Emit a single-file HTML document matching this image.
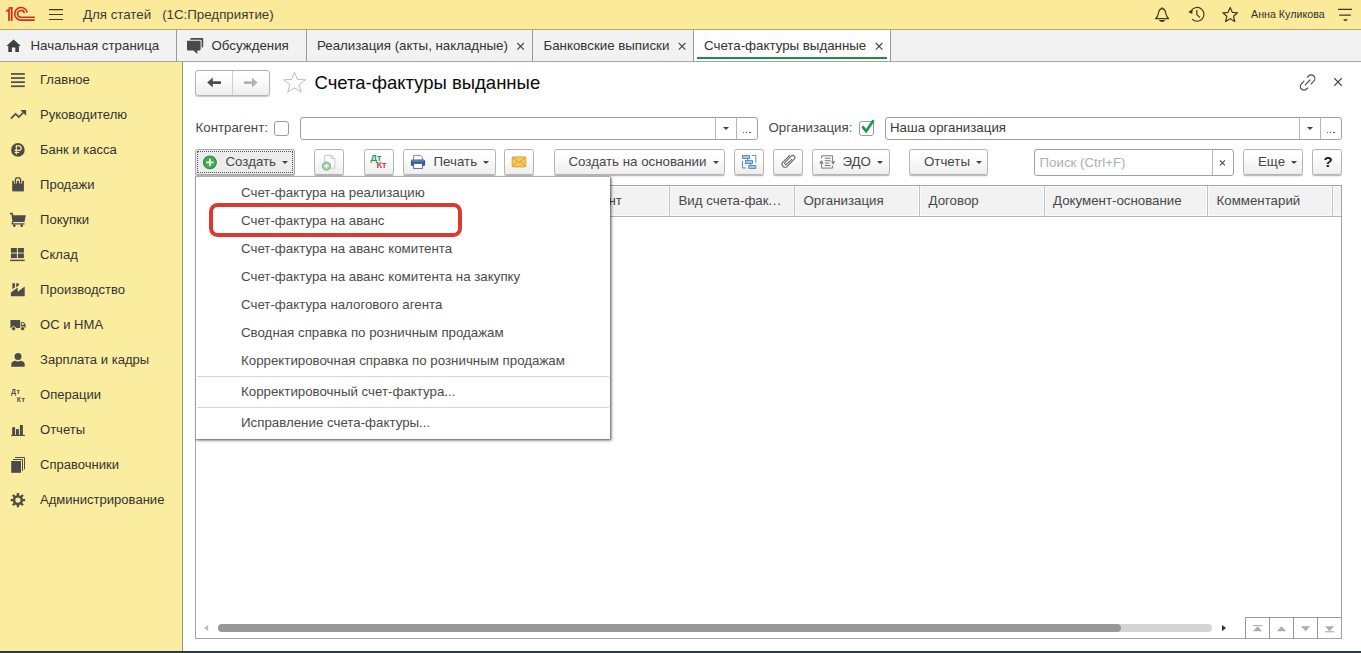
<!DOCTYPE html>
<html lang="ru">
<head>
<meta charset="utf-8">
<title>Счета-фактуры выданные</title>
<style>
*{box-sizing:border-box;margin:0;padding:0}
html,body{width:1361px;height:653px;overflow:hidden;background:#fff}
body{font-family:"Liberation Sans",sans-serif;font-size:13.3px;color:#333;position:relative}
.abs{position:absolute}
svg{position:absolute;overflow:visible}
.t{position:absolute;white-space:nowrap;line-height:1;font-size:13.3px}
#top{position:absolute;left:0;top:0;width:1361px;height:30px;background:#fbea9a;border-bottom:1px solid #b5aa72}
#tabs{position:absolute;left:0;top:30px;width:1361px;height:32px;background:#f2f2f2;border-bottom:1px solid #a6a6a6}
.tsep{position:absolute;top:30px;width:1px;height:31px;background:#9a9a9a}
.tabt{position:absolute;white-space:nowrap;font-size:13.3px;line-height:1;color:#333;top:39px}
#side{position:absolute;left:0;top:62px;width:183px;height:589px;background:#fbed9f;border-right:1px solid #9c966c}
.sit{position:absolute;left:40px;font-size:13.05px;line-height:1;color:#333;white-space:nowrap}
.btn{position:absolute;height:26px;top:149px;border:1px solid #b4b4b4;border-radius:2.5px;background:linear-gradient(#ffffff 20%,#eeeeee);box-shadow:0 1px 0 rgba(0,0,0,.2),0 2px 1px rgba(0,0,0,.07)}
.bt{position:absolute;white-space:nowrap;line-height:1;font-size:13.3px;color:#484848;top:155px}
.arr{position:absolute;width:0;height:0;border-left:3px solid transparent;border-right:3px solid transparent;border-top:3px solid #444;top:161px}
.inp{position:absolute;border:1px solid #a0a0a0;background:#fff;border-radius:3px}
.vl{position:absolute;width:1px;background:#b5b5b5}
.lbl{position:absolute;font-size:13.3px;line-height:1;color:#484848;white-space:nowrap}
.hcell{position:absolute;top:194px;font-size:13.3px;line-height:1;color:#484848;white-space:nowrap}
.hsep{position:absolute;top:186px;width:3px;height:30px;margin-left:-1px;background:linear-gradient(90deg,#fbfbfb 0,#fbfbfb 1px,#c2c2c2 1px,#c2c2c2 2px,#fbfbfb 2px,#fbfbfb 3px)}
.mi{position:absolute;left:241px;font-size:13.3px;line-height:1;color:#4c4c4c;white-space:nowrap}
</style>
</head>
<body>
<!-- TOP BAR -->
<div id="top"></div>
<svg style="left:0;top:0" width="70" height="30" viewBox="0 0 70 30">
  <g fill="none" stroke="#cf2f1c" stroke-width="1.6">
    <path d="M27.2,12.5 A6.3,6.3 0 1 0 21,20.1 H34.8"/>
    <path d="M24.3,13.1 A3.4,3.4 0 1 0 21,17.2 H34.8"/>
    <path d="M6.2,11.4 L9,9.6 V20.9" stroke-width="1.7"/>
    <path d="M11.7,7.2 V20.9" stroke-width="1.8"/>
    <path d="M8.6,8 H12.5" stroke-width="1.6"/>
  </g>
  <g stroke="#3f3a14" stroke-width="1.2">
    <path d="M49,9.6 H63 M49,14.5 H63 M49,19.5 H63"/>
  </g>
</svg>
<div class="t" style="left:83px;top:8px;color:#3b3b3b">Для статей&nbsp;&nbsp;&nbsp;(1С:Предприятие)</div>
<!-- bell -->
<svg style="left:1150px;top:4px" width="24" height="22" viewBox="1150 4 24 22">
  <g fill="none" stroke="#3c3920" stroke-width="1.2" stroke-linejoin="round">
    <path d="M1155.6,18.6 C1158.5,16.4 1158.2,13.6 1158.8,11.6 C1159.4,9.7 1160.5,8.6 1162.1,8.6 C1163.7,8.6 1164.8,9.7 1165.4,11.6 C1166,13.6 1165.7,16.4 1168.6,18.6 Z"/><path d="M1162.1,7.3 V8.7"/>
  </g>
  <path d="M1158.6,20.1 H1165.6 Q1162.1,24 1158.6,20.1 Z" fill="#3c3920"/>
</svg>
<!-- history -->
<svg style="left:1185px;top:4px" width="24" height="22" viewBox="1185 4 24 22">
  <g fill="none" stroke="#3c3920" stroke-width="1.2">
    <path d="M1190.85,11.4 A6.9,6.9 0 1 1 1192.2,19.2"/>
    <path d="M1196.8,10 V14.6 L1200,17.6"/>
  </g>
  <path d="M1188.2,11.9 L1192.6,9.6 L1192.2,14 Z" fill="#3c3920"/>
</svg>
<!-- star -->
<svg style="left:1220px;top:4px" width="24" height="22" viewBox="1220 4 24 22">
  <path d="M1230.2,7.4 L1232.3,12.3 L1237.6,12.8 L1233.6,16.3 L1234.8,21.5 L1230.2,18.8 L1225.6,21.5 L1226.8,16.3 L1222.8,12.8 L1228.1,12.3 Z" fill="none" stroke="#3c3920" stroke-width="1.2" stroke-linejoin="round"/>
</svg>
<div class="t" style="left:1251px;top:9px;font-size:10.7px;color:#333">Анна Куликова</div>
<svg style="left:1334px;top:4px" width="24" height="22" viewBox="1334 4 24 22">
  <path d="M1338,9.4 H1352 M1339.2,15.1 H1350.8" stroke="#3c3920" stroke-width="1.2" fill="none"/>
  <path d="M1343,19.2 H1348 L1345.5,21.6 Z" fill="#3c3920"/>
</svg>

<!-- TABS -->
<div id="tabs"></div>
<div class="abs" style="left:694px;top:30px;width:196px;height:31px;background:#fdfdfd"></div>
<div class="abs" style="left:697px;top:57px;width:190px;height:2px;background:#1d8a4b"></div>
<div class="tsep" style="left:176px"></div>
<div class="tsep" style="left:306px"></div>
<div class="tsep" style="left:532px"></div>
<div class="tsep" style="left:693px"></div>
<div class="tsep" style="left:890px"></div>
<!-- home icon -->
<svg style="left:4px;top:36px" width="20" height="20" viewBox="4 36 20 20">
  <path d="M13.6,39.4 L20.8,46 H18.9 V51.9 H15.3 V47.6 H11.9 V51.9 H8.3 V46 H6.4 Z" fill="#3f3f3f"/>
</svg>
<!-- discussions icon -->
<svg style="left:184px;top:36px" width="22" height="20" viewBox="184 36 22 20">
  <path d="M191,38 H202.4 Q203.2,38 203.2,38.8 V46.6 Q203.2,47.4 202.4,47.4 H201.6 V41 Q201.6,39.8 200.4,39.8 H190.2 V38.8 Q190.2,38 191,38 Z" fill="#4a4a4a"/>
  <path d="M187.8,40.8 H199.8 Q200.6,40.8 200.6,41.6 V49.6 Q200.6,50.4 199.8,50.4 H197.3 V53.9 L193.4,50.4 H187.8 Q187,50.4 187,49.6 V41.6 Q187,40.8 187.8,40.8 Z" fill="#4a4a4a"/>
</svg>
<div class="tabt" style="left:30.5px">Начальная страница</div>
<div class="tabt" style="left:211.5px">Обсуждения</div>
<div class="tabt" style="left:317px">Реализация (акты, накладные)</div>
<div class="tabt" style="left:543.5px">Банковские выписки</div>
<div class="tabt" style="left:704px">Счета-фактуры выданные</div>
<svg style="left:0;top:30px" width="1361" height="32" viewBox="0 30 1361 32">
  <g stroke="#444" stroke-width="1.1" fill="none">
    <path d="M517.3,43 L523.9,49.6 M523.9,43 L517.3,49.6"/>
    <path d="M678.8,43 L685.4,49.6 M685.4,43 L678.8,49.6"/>
    <path d="M875.8,43 L882.4,49.6 M882.4,43 L875.8,49.6"/>
  </g>
</svg>

<!-- SIDEBAR -->
<div id="side"></div>
<svg style="left:0;top:62px" width="40" height="460" viewBox="0 62 40 460">
 <g fill="#4b4b4b">
  <!-- Главное: 4 bars -->
  <rect x="11" y="73.1" width="13.8" height="1.7"/><rect x="11" y="77.2" width="13.8" height="1.7"/><rect x="11" y="81.3" width="13.8" height="1.7"/><rect x="11" y="85.4" width="13.8" height="1.7"/>
  <!-- Руководителю: trend arrow -->
  <path d="M20.4,110 H26.1 V115.7 Z"/>
  <!-- Банк и касса: ruble coin -->
  <circle cx="17.9" cy="149.9" r="6.8"/>
  <!-- Продажи: bag -->
  <path d="M12.2,180.8 H23.9 V191.4 H12.2 Z"/>
  <!-- Покупки: cart -->
  <path d="M9.8,212.8 H12.6 L13.3,215.3 H25.9 L24.4,221.9 H13.6 L12.9,222.6 V223.2 H24.6 V224.4 H11.6 V222.4 L12.4,221.2 L11.4,214.2 H9.8 Z"/>
  <circle cx="14.3" cy="225.7" r="1.35"/><circle cx="21.7" cy="225.7" r="1.35"/>
  <!-- Склад -->
  <rect x="10.9" y="248" width="6" height="4.6"/><rect x="17.9" y="248" width="6" height="4.6"/>
  <rect x="10.9" y="253.5" width="6" height="4.6"/><rect x="17.9" y="253.5" width="6" height="4.6"/>
  <rect x="10.1" y="259.7" width="14.6" height="1.4"/>
  <!-- Производство: factory -->
  <path d="M10.9,296.3 V292.6 L17.7,287.4 V291.8 L24.7,286.6 V296.3 Z"/>
  <path d="M12.4,283.3 H15 V287.2 L12.4,289.2 Z M16.2,283.3 H18.8 V285.4 L16.2,287.2 Z"/>
  <!-- ОС и НМА: truck -->
  <path d="M10.4,320.6 Q10.4,319.9 11.1,319.9 H20.1 V328 H10.4 Z"/>
  <path d="M20.8,321.9 H23.6 L25.5,324.6 V328 H20.8 Z"/>
  <!-- Зарплата и кадры: person -->
  <circle cx="18" cy="356.4" r="3.5"/>
  <path d="M11.3,366.8 V364.6 Q11.3,361.4 15.2,360.8 Q18,362.4 20.8,360.8 Q24.7,361.4 24.7,364.6 V366.8 Z"/>
  <!-- Отчеты: bars -->
  <rect x="12.2" y="427.2" width="2.9" height="7.8"/><rect x="16" y="429.1" width="2.9" height="5.9"/><rect x="19.9" y="425" width="3" height="10"/>
  <rect x="11.1" y="434.9" width="13.8" height="1.1"/>
  <!-- Справочники: books -->
  <rect x="11.2" y="461" width="9.8" height="11.8"/>
 </g>
 <g fill="none" stroke="#4b4b4b">
  <path d="M10.9,118.6 L15.6,113.9 L18.8,117 L23.8,112" stroke-width="1.7"/>
  <path d="M15.4,183.6 V180.2 Q15.4,177.6 18,177.6 Q20.6,177.6 20.6,180.2 V183.6" stroke="#fbed9f" stroke-width="3"/><path d="M15.4,183.6 V180.2 Q15.4,177.6 18,177.6 Q20.6,177.6 20.6,180.2 V183.6" stroke-width="1.3"/>
  <path d="M13,459.5 H22.5 V471" stroke-width="1"/>
  <path d="M15,457.5 H24.5 V469.3" stroke-width="1"/>
  <!-- gear -->
  <circle cx="17.9" cy="500.1" r="3.9" stroke-width="2.6"/>
  <path d="M22.70,500.10 L25.10,500.10 M21.29,503.49 L22.99,505.19 M17.90,504.90 L17.90,507.30 M14.51,503.49 L12.81,505.19 M13.10,500.10 L10.70,500.10 M14.51,496.71 L12.81,495.01 M17.90,495.30 L17.90,492.90 M21.29,496.71 L22.99,495.01" stroke-width="2.3"/>
 </g>
 <!-- ruble glyph -->
 <g fill="none" stroke="#fbed9f" stroke-width="1.2">
  <path d="M16.3,154.4 V145.8 H18.8 Q21.2,145.8 21.2,148.1 Q21.2,150.4 18.8,150.4 H14.6 M14.6,152.5 H19.2"/>
 </g>
 <g fill="#4b4b4b" stroke="#fbed9f" stroke-width="0.9"><circle cx="13.6" cy="328.7" r="2.1"/><circle cx="22.6" cy="328.7" r="2.1"/></g>
 <path d="M21.7,322.8 H23.2 L24.5,324.7 H21.7 Z" fill="#fbed9f"/>
</svg>
<div class="t" style="left:11px;top:388px;font-size:7px;font-weight:bold;letter-spacing:.5px;color:#4b4b4b">Дт</div>
<div class="t" style="left:16.7px;top:396px;font-size:7px;font-weight:bold;letter-spacing:.5px;color:#4b4b4b">Кт</div>
<div class="sit" style="top:73px">Главное</div>
<div class="sit" style="top:108px">Руководителю</div>
<div class="sit" style="top:143px">Банк и касса</div>
<div class="sit" style="top:178px">Продажи</div>
<div class="sit" style="top:213px">Покупки</div>
<div class="sit" style="top:248px">Склад</div>
<div class="sit" style="top:283px">Производство</div>
<div class="sit" style="top:318px">ОС и НМА</div>
<div class="sit" style="top:353px">Зарплата и кадры</div>
<div class="sit" style="top:388px">Операции</div>
<div class="sit" style="top:423px">Отчеты</div>
<div class="sit" style="top:458px">Справочники</div>
<div class="sit" style="top:493px">Администрирование</div>

<!-- CONTENT HEADER -->
<div class="abs" style="left:195px;top:70px;width:75px;height:26px;border:1px solid #b4b4b4;border-radius:3px;background:linear-gradient(#fff 20%,#eee);box-shadow:0 1px 1px rgba(0,0,0,.22)"></div>
<div class="abs" style="left:232px;top:71px;width:1px;height:24px;background:#cfcfcf"></div>
<svg style="left:195px;top:62px" width="120" height="42" viewBox="195 62 120 42">
  <path d="M207.2,82.6 L212.8,77.6 V81.2 H221 V84 H212.8 V87.6 Z" fill="#4d4d4d"/>
  <path d="M257.6,82.6 L252,77.6 V81.2 H244 V84 H252 V87.6 Z" fill="#b3b3b3"/>
  <path d="M294.5,72.2 L297.3,79.4 L305.4,79.8 L299.1,84.7 L301.3,92.2 L294.5,87.9 L287.7,92.2 L289.9,84.7 L283.6,79.8 L291.7,79.4 Z" fill="#fff" stroke="#bdbdbd" stroke-width="1" stroke-linejoin="miter"/>
</svg>
<div class="t" style="left:314.5px;top:74px;font-size:18.5px;color:#0a0a0a">Счета-фактуры выданные</div>
<svg style="left:1295px;top:70px" width="55" height="26" viewBox="1295 70 55 26">
  <g fill="none" stroke="#4a4a4a" stroke-width="1.15" stroke-linecap="round">
    <path d="M1307.4,77.2 L1308.6,76 A3.6,3.6 0 0 1 1313.8,81.2 L1311.2,83.8"/>
    <path d="M1307.8,87.8 L1306.6,89 A3.6,3.6 0 0 1 1301.4,83.8 L1304,81.2"/>
    <path d="M1305.2,84.8 L1310,80"/>
  </g>
  <path d="M1334.2,78.2 L1341.8,85.8 M1341.8,78.2 L1334.2,85.8" stroke="#3a3a3a" stroke-width="1.2" fill="none"/>
</svg>

<!-- FILTER ROW -->
<div class="lbl" style="left:195.5px;top:120.6px">Контрагент:</div>
<div class="inp" style="left:274px;top:121px;width:15px;height:15px;border-radius:3px;border-color:#9b9b9b"></div>
<div class="inp" style="left:300px;top:117px;width:458px;height:23px"></div>
<div class="vl" style="left:715px;top:118px;height:21px"></div>
<div class="vl" style="left:736px;top:118px;height:21px"></div>
<div class="arr" style="left:723px;top:127px"></div>
<div class="abs" style="left:743px;top:131.5px;width:1.2px;height:1.3px;background:#555"></div><div class="abs" style="left:746.2px;top:131.5px;width:1.2px;height:1.3px;background:#555"></div><div class="abs" style="left:749.4px;top:131.5px;width:1.2px;height:1.3px;background:#555"></div>
<div class="lbl" style="left:768.5px;top:120.6px">Организация:</div>
<div class="inp" style="left:859px;top:121px;width:15px;height:15px;border-radius:3px;border-color:#9b9b9b"></div>
<svg style="left:855px;top:114px" width="26" height="26" viewBox="855 114 26 26">
  <path d="M862.4,126.4 L866.1,131.2 L873.6,120.2" fill="none" stroke="#0f9a4e" stroke-width="2.6" stroke-linecap="butt" stroke-linejoin="miter"/>
</svg>
<div class="inp" style="left:885px;top:117px;width:457px;height:23px"></div>
<div class="vl" style="left:1299px;top:118px;height:21px"></div>
<div class="vl" style="left:1320px;top:118px;height:21px"></div>
<div class="arr" style="left:1306.5px;top:127px"></div>
<div class="abs" style="left:1327px;top:131.5px;width:1.2px;height:1.3px;background:#555"></div><div class="abs" style="left:1330.2px;top:131.5px;width:1.2px;height:1.3px;background:#555"></div><div class="abs" style="left:1333.4px;top:131.5px;width:1.2px;height:1.3px;background:#555"></div>
<div class="lbl" style="left:890px;top:120.6px;color:#3a3a3a">Наша организация</div>

<!-- TOOLBAR -->
<div class="btn" style="left:195px;width:100px;background:#ececec;border-color:#a9a9a9"></div>
<div class="abs" style="left:197px;top:151px;width:96px;height:22px;border:1px dotted #555"></div>
<svg style="left:200px;top:152px" width="20" height="20" viewBox="200 152 20 20">
  <circle cx="209.9" cy="162.4" r="6.4" fill="#43ad52" stroke="#2a8a3c" stroke-width="1.1"/>
  <path d="M209.9,158.7 V166.1 M206.2,162.4 H213.6" stroke="#e6fbe6" stroke-width="1.9" fill="none"/>
</svg>
<div class="bt" style="left:225.5px">Создать</div>
<div class="arr" style="left:282px"></div>

<div class="btn" style="left:314px;width:30px"></div>
<svg style="left:318px;top:152px" width="22" height="20" viewBox="318 152 22 20">
  <path d="M324.6,155.4 H331.6 L334.8,158.6 V168.2 H324.6 Z" fill="#fbfbfb" stroke="#c4c4c4" stroke-width="0.9"/>
  <path d="M331.6,155.4 V158.6 H334.8" fill="none" stroke="#c4c4c4" stroke-width="0.9"/>
  <circle cx="326.5" cy="166.1" r="4.2" fill="#8fcf97" stroke="#6db877" stroke-width="0.8"/>
  <path d="M326.5,163.7 V168.5 M324.1,166.1 H328.9" stroke="#fff" stroke-width="1.5" fill="none"/>
</svg>

<div class="btn" style="left:364px;width:30px"></div>
<div class="t" style="left:370.5px;top:153.5px;font-size:9.2px;font-weight:bold;color:#1c9a5c">Дт</div>
<div class="t" style="left:376.5px;top:161px;font-size:9.2px;font-weight:bold;color:#d2444f">Кт</div>

<div class="btn" style="left:403px;width:93px"></div>
<svg style="left:408px;top:152px" width="20" height="20" viewBox="408 152 20 20">
  <path d="M413.6,155.4 H420.4 L422.4,157.4 V160.6 H413.6 Z" fill="#fff" stroke="#6b7f9c" stroke-width="0.9"/>
  <rect x="410.9" y="159.4" width="14.2" height="6.6" rx="1.6" fill="#2f5f9c"/>
  <rect x="412" y="160.2" width="12" height="1.4" fill="#5f8cc4"/>
  <rect x="413.6" y="163.4" width="8.8" height="5" fill="#fff" stroke="#4a5f80" stroke-width="0.9"/>
</svg>
<div class="bt" style="left:433.5px">Печать</div>
<div class="arr" style="left:483px"></div>

<div class="btn" style="left:504px;width:30px"></div>
<svg style="left:508px;top:152px" width="22" height="20" viewBox="508 152 22 20">
  <rect x="512.2" y="156.9" width="13.6" height="10" rx="1" fill="#f6c860" stroke="#e0a030" stroke-width="1"/>
  <path d="M512.6,157.4 L519,162.6 L525.4,157.4 M512.6,166.4 L517.4,161.6 M525.4,166.4 L520.6,161.6" fill="none" stroke="#d8952a" stroke-width="0.9"/>
</svg>

<div class="btn" style="left:554px;width:171px"></div>
<div class="bt" style="left:568.5px">Создать на основании</div>
<div class="arr" style="left:713px"></div>

<div class="btn" style="left:734px;width:30px"></div>
<svg style="left:738px;top:152px" width="22" height="20" viewBox="738 152 22 20">
  <g fill="#a9cdea" stroke="#4a86bd" stroke-width="0.9">
    <rect x="742.5" y="155.6" width="7" height="2.8"/>
    <rect x="745.5" y="160.6" width="7" height="2.8"/>
    <rect x="748.8" y="165.6" width="7" height="2.8"/>
  </g>
  <g fill="none" stroke="#4a86bd" stroke-width="0.9">
    <path d="M751.8,155.5 H755.8 V162.8"/>
    <path d="M742.5,161 V168 H746.2"/>
    <path d="M747.6,158.4 V160.6 M750.6,163.4 V165.6"/>
  </g>
</svg>

<div class="btn" style="left:773px;width:30px"></div>
<svg style="left:777px;top:152px" width="22" height="20" viewBox="777 152 22 20">
  <g transform="translate(788.3,160.9) rotate(-45)">
    <path d="M4.8,-3 H-4.6 A3,3 0 0 0 -4.6,3 H5.4 A2.15,2.15 0 0 0 5.4,-1.3 H-3.3 A1.3,1.3 0 0 0 -3.3,1.3 H3.6" fill="none" stroke="#606060" stroke-width="1" stroke-linecap="round"/>
  </g>
</svg>

<div class="btn" style="left:812px;width:78px"></div>
<svg style="left:816px;top:152px" width="24" height="20" viewBox="816 152 24 20">
  <g fill="none" stroke="#7d7d7d" stroke-width="1">
    <path d="M821.6,158.6 V155.8 H832.6 V161.4 M832.6,165.6 V168.1 H821.6 V163.2"/>
    <path d="M824.8,158.3 H830.6 M824.8,160.7 H830.6 M824.8,163.1 H829.4 M824.8,165.5 H830.6"/>
  </g>
  <path d="M819.1,163.5 L821.4,160.1 L823.7,163.5 Z M830.8,161.3 L833.1,164.7 L835.4,161.3 Z" fill="#7d7d7d"/>
</svg>
<div class="bt" style="left:842.5px">ЭДО</div>
<div class="arr" style="left:877px"></div>

<div class="btn" style="left:909px;width:79px"></div>
<div class="bt" style="left:924px">Отчеты</div>
<div class="arr" style="left:975.5px"></div>

<div class="inp" style="left:1034px;top:149px;width:200px;height:27px"></div>
<div class="vl" style="left:1212px;top:150px;height:25px"></div>
<div class="lbl" style="left:1039.5px;top:156px;color:#b0b0b0">Поиск (Ctrl+F)</div>
<svg style="left:1214px;top:152px" width="18" height="20" viewBox="1214 152 18 20">
  <path d="M1219.9,160.3 L1224.9,165.3 M1224.9,160.3 L1219.9,165.3" stroke="#4a4a4a" stroke-width="1.1" fill="none"/>
</svg>
<div class="btn" style="left:1243px;width:60px"></div>
<div class="bt" style="left:1258px">Еще</div>
<div class="arr" style="left:1291px"></div>
<div class="btn" style="left:1312px;width:30px"></div>
<div class="t" style="left:1323.5px;top:154px;font-size:15px;font-weight:bold;color:#1a1a1a">?</div>

<!-- TABLE -->
<div class="abs" style="left:195px;top:185px;width:1147px;height:454px;border:1px solid #a3a3a3;background:#fff"></div>
<div class="abs" style="left:196px;top:186px;width:1145px;height:31px;background:#f2f2f2;border-bottom:1px solid #b4b4b4;box-shadow:inset 0 1px 0 #fbfbfb,inset 0 -1px 0 #fbfbfb"></div>
<div class="hsep" style="left:669px"></div>
<div class="hsep" style="left:794px"></div>
<div class="hsep" style="left:919px"></div>
<div class="hsep" style="left:1044px"></div>
<div class="hsep" style="left:1207px"></div>
<div class="hsep" style="left:1332px"></div>
<div class="hcell" style="left:608.4px">нт</div>
<div class="hcell" style="left:678.5px">Вид счета-фак<span style="letter-spacing:.6px">...</span></div>
<div class="hcell" style="left:803.5px">Организация</div>
<div class="hcell" style="left:928.5px">Договор</div>
<div class="hcell" style="left:1053px">Документ-основание</div>
<div class="hcell" style="left:1216.5px">Комментарий</div>

<!-- SCROLLBAR + NAV -->
<div class="abs" style="left:218px;top:624px;width:994px;height:8px;border-radius:4px;background:#d5d5d5"></div>
<div class="abs" style="left:218px;top:624px;width:903px;height:8px;border-radius:4px;background:#999"></div>
<svg style="left:196px;top:616px" width="1146" height="24" viewBox="196 616 1146 24">
  <path d="M203.9,628 L208.2,624.9 V631.2 Z" fill="#bdbdbd"/>
  <path d="M1226.1,628 L1222,624.9 V631.2 Z" fill="#333"/>
  <g fill="none" stroke="#999" stroke-width="1">
    <path d="M1245.5,638.5 V617.5 H1341.5"/>
    <path d="M1269.5,617.5 V638.5 M1293.5,617.5 V638.5 M1317.5,617.5 V638.5"/>
  </g>
  <g fill="#adadad">
    <rect x="1253" y="625" width="9.2" height="1.1"/>
    <path d="M1253,631.2 H1262.2 L1257.6,626.2 Z"/>
    <path d="M1276.9,631.2 H1286.1 L1281.5,626.2 Z"/>
    <path d="M1301,626.2 H1310.2 L1305.6,631.2 Z"/>
    <path d="M1325,626.2 H1334.2 L1329.6,631.2 Z"/>
    <rect x="1325" y="631.2" width="9.2" height="1.1"/>
  </g>
</svg>

<!-- DROPDOWN MENU -->
<div class="abs" style="left:195px;top:176px;width:415px;height:263px;background:#fff;border-left:1px solid #a3a3a3;border-top:1px solid #adadad;box-shadow:1px 1px 2px rgba(0,0,0,.5),2px 2px 3px rgba(0,0,0,.22)"></div>
<div class="mi" style="top:186px">Счет-фактура на реализацию</div>
<div class="mi" style="top:214px">Счет-фактура на аванс</div>
<div class="mi" style="top:242px">Счет-фактура на аванс комитента</div>
<div class="mi" style="top:270px">Счет-фактура на аванс комитента на закупку</div>
<div class="mi" style="top:298px">Счет-фактура налогового агента</div>
<div class="mi" style="top:326px">Сводная справка по розничным продажам</div>
<div class="mi" style="top:354px">Корректировочная справка по розничным продажам</div>
<div class="abs" style="left:197px;top:376px;width:412px;height:1px;background:#d9d6ca"></div>
<div class="mi" style="top:385px">Корректировочный счет-фактура...</div>
<div class="abs" style="left:197px;top:407px;width:412px;height:1px;background:#d9d6ca"></div>
<div class="mi" style="top:416px">Исправление счета-фактуры...</div>
<div class="abs" style="left:208.8px;top:202.8px;width:253.2px;height:34.4px;border:4px solid #dc3a30;border-radius:8.5px"></div>

<!-- BOTTOM STRIP -->
<div class="abs" style="left:0;top:651px;width:1361px;height:2px;background:#243a4e"></div>
</body>
</html>
